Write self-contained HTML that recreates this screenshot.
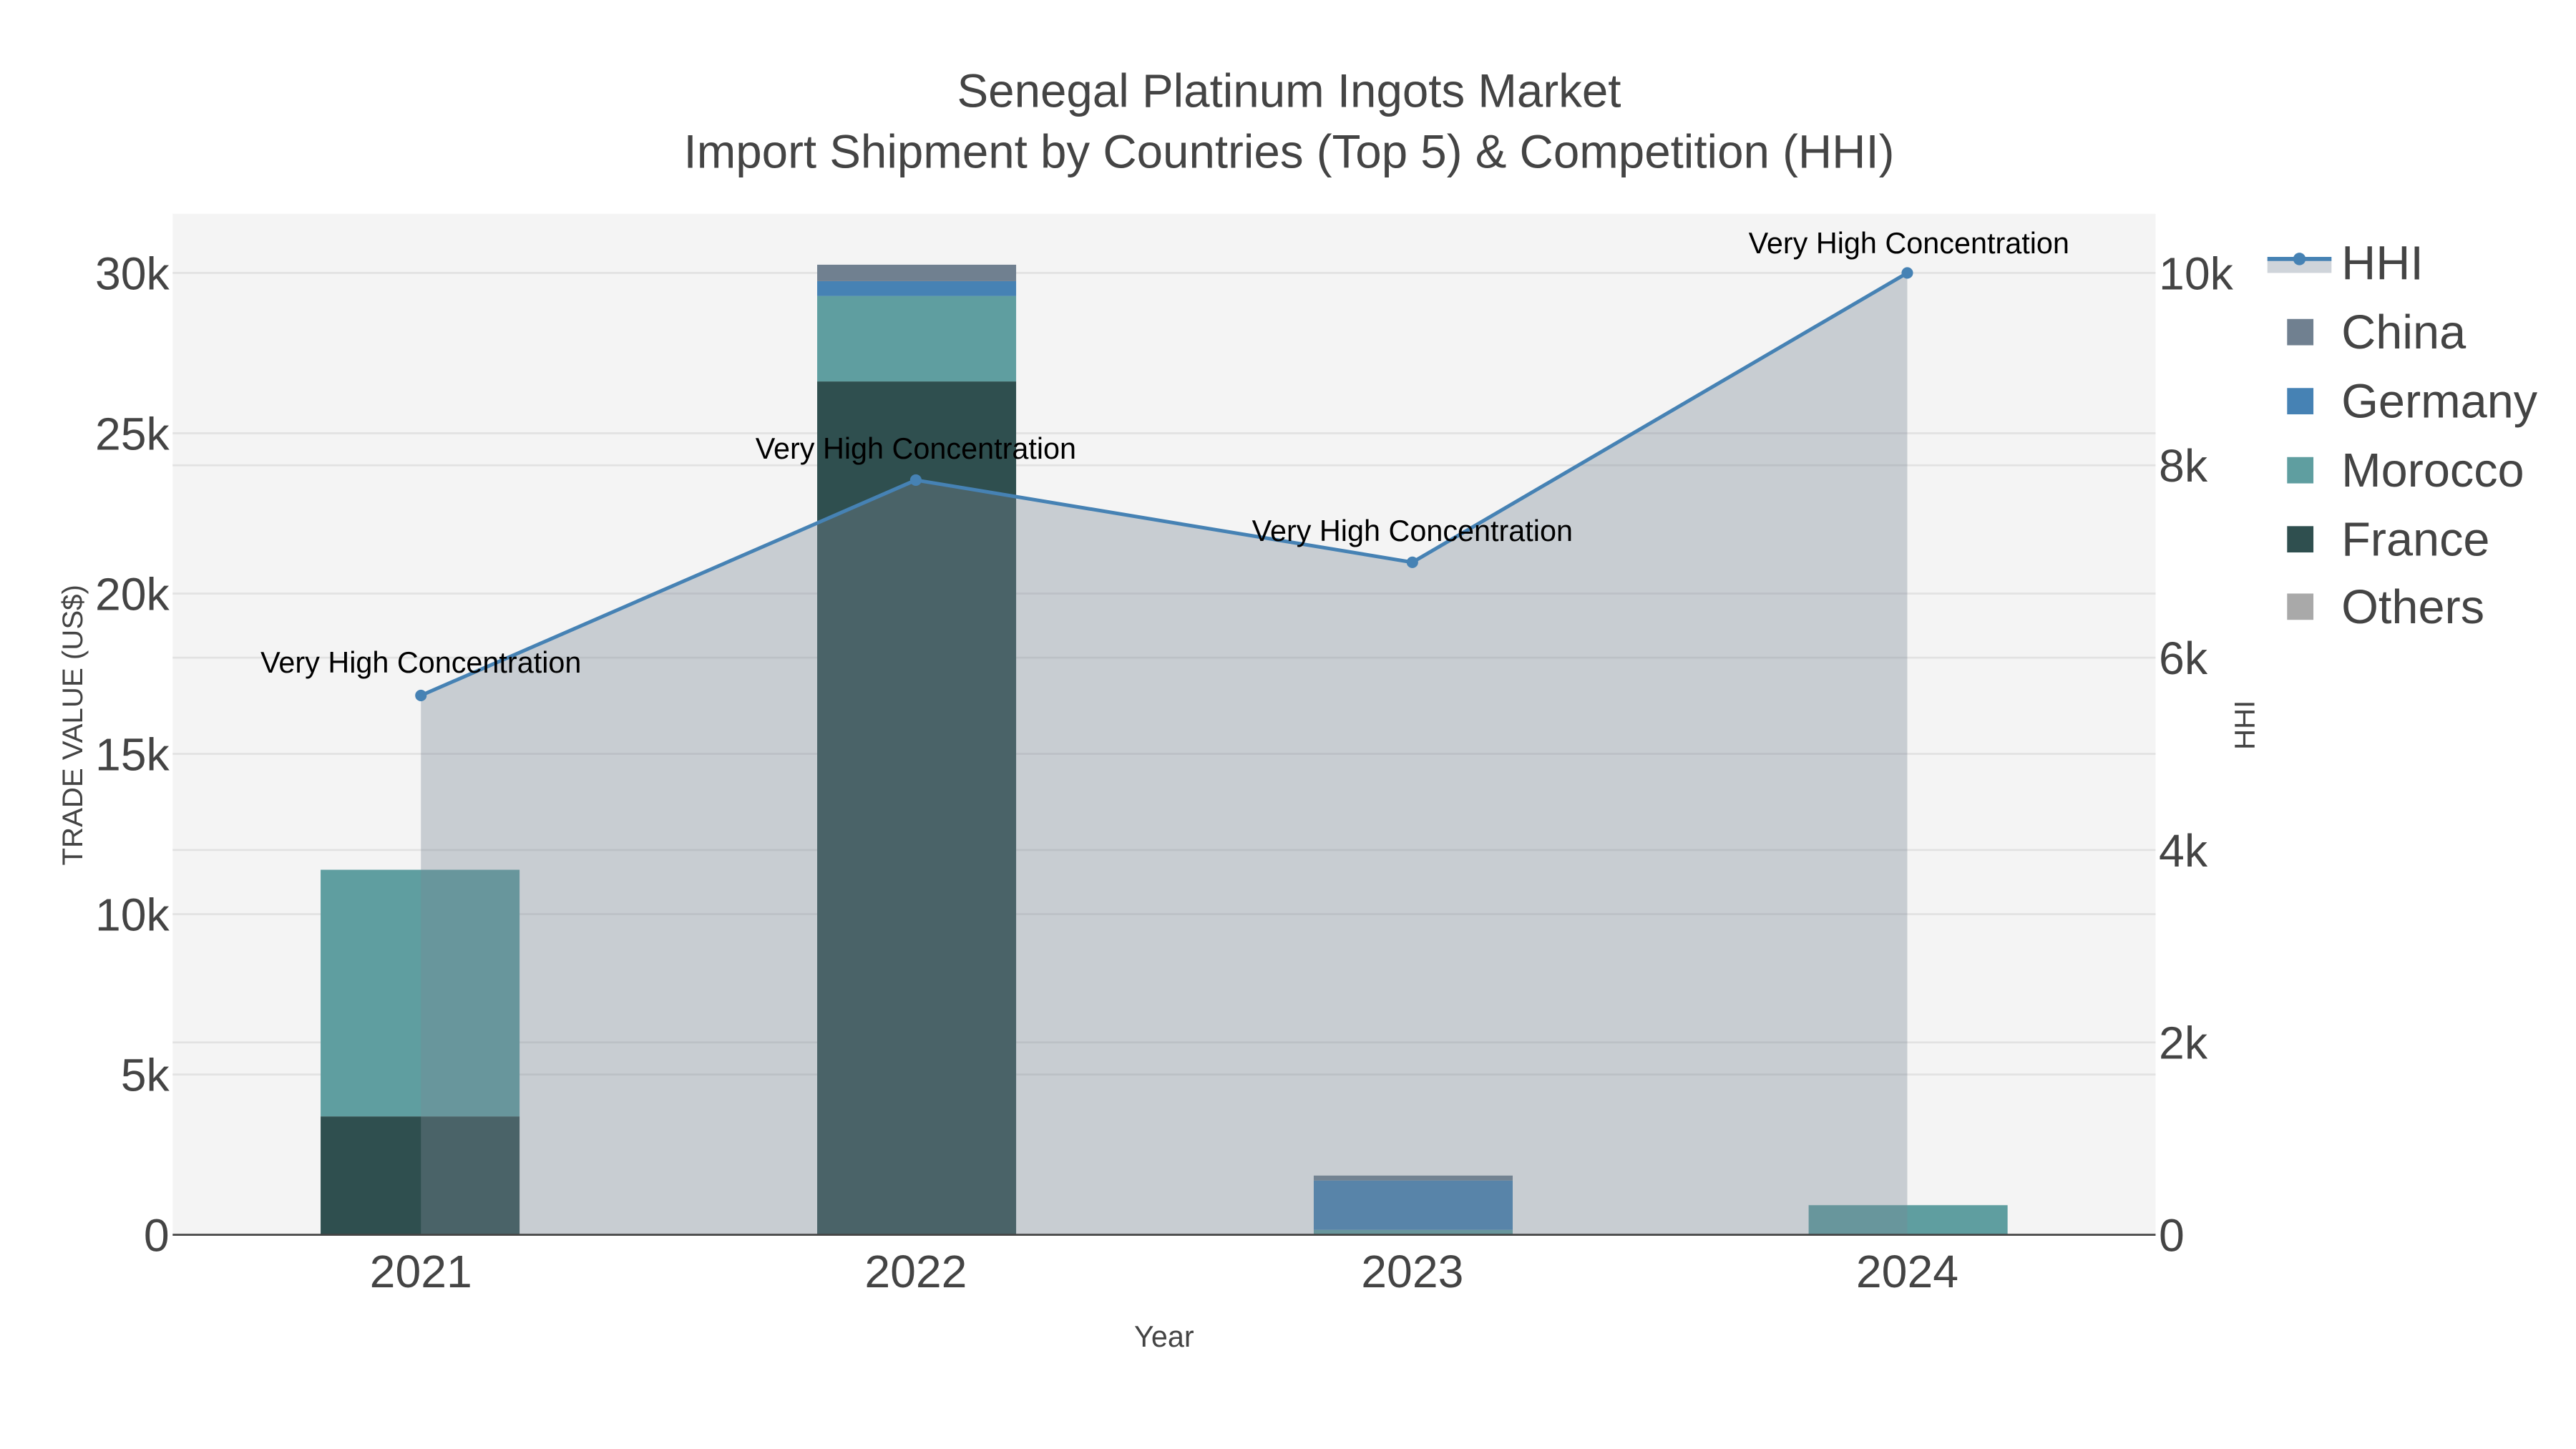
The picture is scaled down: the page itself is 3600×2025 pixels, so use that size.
<!DOCTYPE html>
<html><head><meta charset="utf-8"><style>html,body{margin:0;padding:0;background:#fff}svg{display:block}</style></head>
<body>
<svg width="3600" height="2025" viewBox="0 0 1566.7 881.3" preserveAspectRatio="none" xmlns="http://www.w3.org/2000/svg" font-family="Liberation Sans, Arial, sans-serif">
<rect width="1566.7" height="881.3" fill="#fff"/>
<rect x="105" y="130" width="1206" height="621" fill="#f4f4f4"/>
<g stroke="#e2e2e2" stroke-width="1.2">
<line x1="105" x2="1311" y1="653.5" y2="653.5"/><line x1="105" x2="1311" y1="556" y2="556"/><line x1="105" x2="1311" y1="458.5" y2="458.5"/><line x1="105" x2="1311" y1="361" y2="361"/><line x1="105" x2="1311" y1="263.5" y2="263.5"/><line x1="105" x2="1311" y1="166" y2="166"/>
<line x1="105" x2="1311" y1="634" y2="634"/><line x1="105" x2="1311" y1="517" y2="517"/><line x1="105" x2="1311" y1="400" y2="400"/><line x1="105" x2="1311" y1="283" y2="283"/>
</g>
<rect x="195" y="679" width="121" height="72" fill="#2f4f4f"/>
<rect x="195" y="529" width="121" height="150" fill="#5f9ea0"/>
<rect x="497" y="232" width="121" height="519" fill="#2f4f4f"/>
<rect x="497" y="180" width="121" height="52" fill="#5f9ea0"/>
<rect x="497" y="171" width="121" height="9" fill="#4682b4"/>
<rect x="497" y="161" width="121" height="10" fill="#708090"/>
<rect x="799" y="748" width="121" height="3" fill="#5f9ea0"/>
<rect x="799" y="718" width="121" height="30" fill="#4682b4"/>
<rect x="799" y="715" width="121" height="3" fill="#708090"/>
<rect x="1100" y="733" width="121" height="18" fill="#5f9ea0"/>
<path d="M256 751 L256 423 L557 292 L859 342 L1160 166 L1160 751 Z" fill="rgb(123,135,150)" fill-opacity="0.36"/>
<line x1="105" x2="1311" y1="751" y2="751" stroke="#444" stroke-width="1.2"/>
<polyline points="256,423 557,292 859,342 1160,166" fill="none" stroke="#4682b4" stroke-width="2.2"/>
<g fill="#4682b4"><circle cx="256" cy="423" r="3.5"/><circle cx="557" cy="292" r="3.5"/><circle cx="859" cy="342" r="3.5"/><circle cx="1160" cy="166" r="3.5"/></g>
<g font-size="18" fill="#000" text-anchor="middle">
<text x="256" y="409">Very High Concentration</text>
<text x="557" y="279">Very High Concentration</text>
<text x="859" y="329">Very High Concentration</text>
<text x="1161" y="154">Very High Concentration</text>
</g>
<g font-size="28" fill="#444" text-anchor="end">
<text x="103" y="761">0</text><text x="103" y="663.5">5k</text><text x="103" y="566">10k</text><text x="103" y="468.5">15k</text><text x="103" y="371">20k</text><text x="103" y="273.5">25k</text><text x="103" y="176">30k</text>
</g>
<g font-size="28" fill="#444">
<text x="1313" y="761">0</text><text x="1313" y="644">2k</text><text x="1313" y="527">4k</text><text x="1313" y="410">6k</text><text x="1313" y="293">8k</text><text x="1313" y="176">10k</text>
</g>
<g font-size="28" fill="#444" text-anchor="middle">
<text x="256" y="783">2021</text><text x="557" y="783">2022</text><text x="859" y="783">2023</text><text x="1160" y="783">2024</text>
</g>
<text x="708" y="819" font-size="18" fill="#444" text-anchor="middle">Year</text>
<text transform="translate(50,441) rotate(-90)" font-size="17.5" fill="#444" text-anchor="middle">TRADE VALUE (US$)</text>
<text transform="translate(1371,441) rotate(-90)" font-size="17.5" fill="#444" text-anchor="middle">HHI</text>
<g font-size="28.5" fill="#444" text-anchor="middle">
<text x="784" y="65">Senegal Platinum Ingots Market</text>
<text x="784" y="102">Import Shipment by Countries (Top 5) &amp; Competition (HHI)</text>
</g>
<rect x="1379" y="158" width="39" height="8" fill="#cfd4da"/>
<line x1="1379" x2="1418" y1="157.5" y2="157.5" stroke="#4682b4" stroke-width="2.5"/>
<circle cx="1398.5" cy="157.5" r="3.8" fill="#4682b4"/>
<rect x="1391" y="194" width="16" height="16" fill="#708090"/>
<rect x="1391" y="236" width="16" height="16" fill="#4682b4"/>
<rect x="1391" y="278" width="16" height="16" fill="#5f9ea0"/>
<rect x="1391" y="320" width="16" height="16" fill="#2f4f4f"/>
<rect x="1391" y="361" width="16" height="16" fill="#a9a9a9"/>
<g font-size="29" fill="#444">
<text x="1424" y="170">HHI</text><text x="1424" y="212">China</text><text x="1424" y="254">Germany</text><text x="1424" y="296">Morocco</text><text x="1424" y="338">France</text><text x="1424" y="379">Others</text>
</g>
</svg>
</body></html>
